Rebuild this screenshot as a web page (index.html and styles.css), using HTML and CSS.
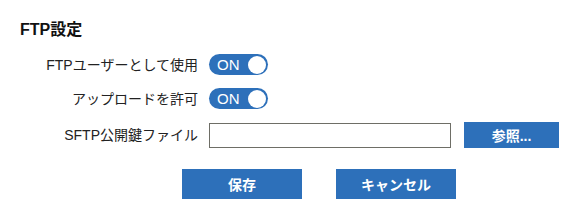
FILE: index.html
```html
<!DOCTYPE html>
<html lang="ja">
<head>
<meta charset="utf-8">
<link rel="stylesheet" href="styles.css">
</head>
<body>
<div class="panel">
  <h2 class="title">FTP設定</h2>
  <div class="form">
    <div class="row">
      <label class="label">FTPユーザーとして使用</label>
      <span class="toggle"><span class="toggle-text">ON</span><span class="knob"></span></span>
    </div>
    <div class="row">
      <label class="label">アップロードを許可</label>
      <span class="toggle"><span class="toggle-text">ON</span><span class="knob"></span></span>
    </div>
    <div class="row row-file">
      <label class="label">SFTP公開鍵ファイル</label>
      <input class="file-input" type="text">
      <button class="btn btn-browse">参照...</button>
    </div>
  </div>
  <div class="actions">
    <button class="btn btn-action">保存</button>
    <button class="btn btn-action">キャンセル</button>
  </div>
</div>
</body>
</html>
```
FILE: styles.css
```css
* { box-sizing: border-box; }
body {
  margin: 0;
  background: #fff;
  font-family: "Liberation Sans", "Noto Sans CJK JP", sans-serif;
  color: #222;
}
.panel {
  padding: 19px 0 0 20px;
}
.title {
  margin: 0;
  font-size: 16px;
  line-height: 22px;
  font-weight: bold;
  color: #111;
}
.form {
  margin-top: 13px;
  display: flex;
  flex-direction: column;
  gap: 13px;
}
.row {
  display: flex;
  align-items: center;
  height: 21px;
}
.row-file { height: 26px; }
.label {
  width: 178px;
  margin-right: 11px;
  text-align: right;
  font-size: 14px;
  line-height: 18px;
  color: #222;
}
.toggle {
  display: inline-flex;
  align-items: center;
  width: 59px;
  height: 21px;
  border-radius: 11px;
  background: #2d70ba;
  padding: 0 2px 0 8px;
}
.toggle-text {
  color: #fff;
  font-size: 15px;
  line-height: 21px;
}
.knob {
  margin-left: auto;
  width: 18px;
  height: 18px;
  border-radius: 50%;
  background: #fff;
}
.file-input {
  width: 242px;
  height: 25px;
  border: 1.5px solid #6e6e66;
  margin: 0;
  padding: 0 4px;
  font: inherit;
}
.btn {
  border: none;
  background: #2d70ba;
  color: #fff;
  font-family: inherit;
  font-weight: bold;
  cursor: pointer;
  padding: 0;
}
.btn-browse {
  margin-left: 13px;
  width: 95px;
  height: 26px;
  font-size: 14px;
}
.actions {
  display: flex;
  gap: 34px;
  margin: 21px 0 0 162px;
}
.btn-action {
  width: 120px;
  height: 30px;
  font-size: 14px;
}
```
